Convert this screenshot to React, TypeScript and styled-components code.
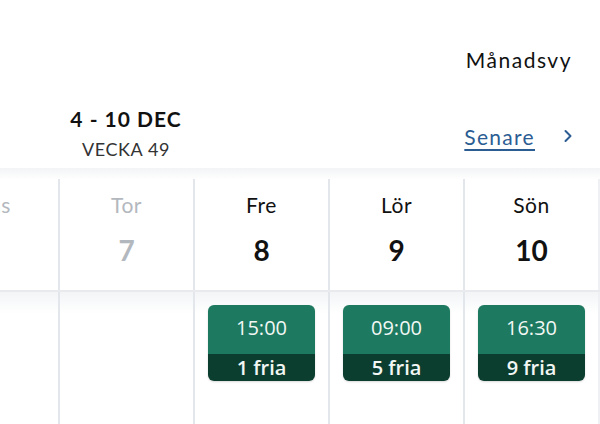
import React from "react";
import styled, { createGlobalStyle } from "styled-components";

const Global = createGlobalStyle`
  html, body { margin: 0; padding: 0; background: #fff; }
  body { font-family: "Lato", "Open Sans", sans-serif; color: #111; }
  #root { width: 600px; height: 424px; overflow: hidden; }
`;

const Page = styled.div`
  width: 600px;
  height: 424px;
  overflow: hidden;
  display: flex;
  flex-direction: column;
  background: #fff;
`;

const Top = styled.div`
  height: 168px;
  display: flex;
  flex-direction: column;
  padding: 0 25px 0 0;
  box-sizing: border-box;
`;

const ViewRow = styled.div`
  display: flex;
  justify-content: flex-end;
  padding: 46px 3px 0 0;
  height: 30px;
`;

const ViewLink = styled.span`
  font-size: 21px;
  line-height: 28px;
  color: #111;
  letter-spacing: 1.5px;
`;

const NavRow = styled.div`
  display: flex;
  justify-content: space-between;
  align-items: center;
  margin-top: 29px;
`;

const WeekLabel = styled.div`
  width: 252px;
  display: flex;
  flex-direction: column;
  align-items: center;
`;

const Range = styled.div`
  font-size: 21px;
  font-weight: 700;
  line-height: 28px;
  letter-spacing: 1px;
  color: #111;
`;

const Week = styled.div`
  font-size: 18px;
  line-height: 24px;
  letter-spacing: 0.6px;
  color: #333;
  margin-top: 4px;
`;

const Later = styled.a`
  display: flex;
  align-items: center;
  gap: 26px;
  font-size: 21px;
  letter-spacing: 1.3px;
  color: #2b5d93;
  text-decoration: underline;
  text-underline-offset: 4px;
  text-decoration-thickness: 1.5px;
  margin-top: 6px;
  cursor: pointer;
`;

const Chevron = styled.svg`
  width: 14px;
  height: 14px;
`;

const Calendar = styled.div`
  margin-left: -75px;
  width: 675px;
  display: flex;
  flex-direction: column;
  flex: 1;
  background: linear-gradient(#f3f4f6, #fff 12px);
  padding-top: 11px;
`;

const HeadRow = styled.div`
  display: grid;
  grid-template-columns: repeat(5, 135px);
  height: 111px;
  background: #fff;
  border-bottom: 2px solid #e8eaee;
`;

const HeadCell = styled.div<{ $past?: boolean }>`
  display: flex;
  flex-direction: column;
  align-items: center;
  border-right: 2px solid #e3e6ea;
  color: ${(p) => (p.$past ? "#b3b8be" : "#111")};
  &:last-child { border-right: 2px solid #eef0f3; }
`;

const DayName = styled.div`
  font-size: 21px;
  line-height: 26px;
  letter-spacing: 0.5px;
  margin-top: 13px;
`;

const DayNum = styled.div`
  font-size: 28px;
  font-weight: 700;
  line-height: 34px;
  margin-top: 15px;
`;

const BodyRow = styled.div`
  display: grid;
  grid-template-columns: repeat(5, 135px);
  flex: 1;
`;

const BodyCell = styled.div`
  border-right: 2px solid #e3e6ea;
  background: linear-gradient(#f3f4f6, #fff 22px);
  display: flex;
  justify-content: center;
  padding-top: 13px;
  &:last-child { border-right: 2px solid #eef0f3; }
`;

const Slot = styled.button`
  width: 107px;
  height: 76px;
  border: none;
  padding: 0;
  border-radius: 6px;
  overflow: hidden;
  display: flex;
  flex-direction: column;
  font-family: "Open Sans", "Noto Sans", sans-serif;
  color: #f2f7f4;
  cursor: pointer;
  box-shadow: 0 1px 2px rgba(0, 0, 0, 0.15);
`;

const SlotTime = styled.div`
  height: 52px;
  background: #1d7a61;
  display: flex;
  align-items: center;
  justify-content: center;
  font-size: 20px;
  font-weight: 500;
  padding-bottom: 4px;
  box-sizing: border-box;
`;

const SlotFree = styled.div`
  flex: 1;
  background: #0c3e30;
  display: flex;
  align-items: center;
  justify-content: center;
  font-size: 20px;
  font-weight: 600;
`;

const days = [
  { name: "Ons", num: "6", past: true },
  { name: "Tor", num: "7", past: true },
  { name: "Fre", num: "8" },
  { name: "Lör", num: "9" },
  { name: "Sön", num: "10" },
];

const slots: (null | { time: string; free: string })[] = [
  null,
  null,
  { time: "15:00", free: "1 fria" },
  { time: "09:00", free: "5 fria" },
  { time: "16:30", free: "9 fria" },
];

export default function App() {
  return (
    <Page>
      <Global />
      <Top>
        <ViewRow>
          <ViewLink>Månadsvy</ViewLink>
        </ViewRow>
        <NavRow>
          <WeekLabel>
            <Range>4 - 10 DEC</Range>
            <Week>VECKA 49</Week>
          </WeekLabel>
          <Later>
            Senare
            <Chevron viewBox="0 0 14 14" fill="none">
              <path d="M4.5 2 L9.5 7 L4.5 12" stroke="#2b5d93" strokeWidth="2" strokeLinecap="round" strokeLinejoin="round" />
            </Chevron>
          </Later>
        </NavRow>
      </Top>
      <Calendar>
        <HeadRow>
          {days.map((d) => (
            <HeadCell key={d.name} $past={d.past}>
              <DayName>{d.name}</DayName>
              <DayNum>{d.num}</DayNum>
            </HeadCell>
          ))}
        </HeadRow>
        <BodyRow>
          {slots.map((s, i) => (
            <BodyCell key={i}>
              {s && (
                <Slot>
                  <SlotTime>{s.time}</SlotTime>
                  <SlotFree>{s.free}</SlotFree>
                </Slot>
              )}
            </BodyCell>
          ))}
        </BodyRow>
      </Calendar>
    </Page>
  );
}
